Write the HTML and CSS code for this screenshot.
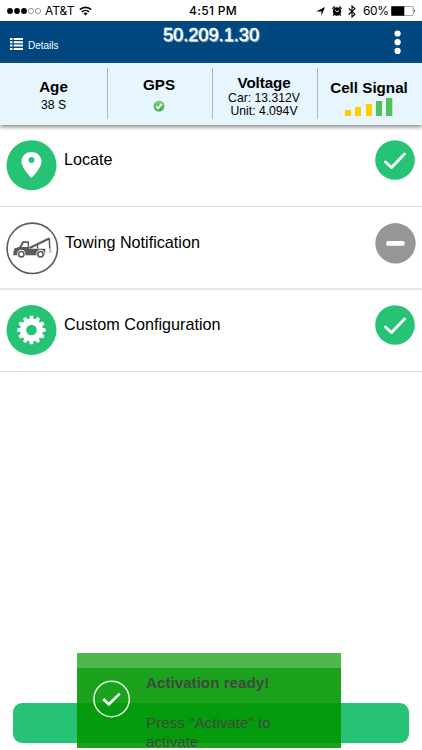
FILE: index.html
```html
<!DOCTYPE html>
<html lang="en">
<head>
<meta charset="utf-8">
<title>Details</title>
<link rel="stylesheet" href="styles.css">
</head>
<body>
<div class="screen">
  <div class="status">
    <div class="carrier">
      <svg class="dots" width="35" height="8" viewBox="0 0 35 8"><g><circle cx="3" cy="4" r="2.9"/><circle cx="10" cy="4" r="2.9"/><circle cx="17" cy="4" r="2.9"/></g><g fill="none" stroke="#555" stroke-width=".6"><circle cx="24" cy="4" r="2.6"/><circle cx="31" cy="4" r="2.6"/></g></svg>
      <span class="net">AT&amp;T</span>
      <svg class="wifi" width="13" height="10" viewBox="0 0 13 10"><path d="M.8 3.7a8.2 8.2 0 0 1 11.4 0M2.9 5.9a5.2 5.2 0 0 1 7.2 0" fill="none" stroke="#000" stroke-width="1.6"/><path d="M4.5 7.4a2.8 2.8 0 0 1 4 0L6.500 9.500z"/></svg>
    </div>
    <div class="clock">4:51 PM</div>
    <div class="indicators">
      <svg class="loc" width="9" height="9" viewBox="0 0 9 9"><path d="M9 0L5.400 9V4.600H0z"/></svg>
      <svg class="alarm" width="10" height="10" viewBox="0 0 10 10"><circle cx="5" cy="5.500" r="4.200"/><path d="M.4 2.700L2.700.6M9.600 2.700L7.300.6M2.200 8.400L1.200 9.600M7.800 8.400l1 1.200" stroke="#000" stroke-width="1.300"/><path d="M3 4l2 1.800L7 4.600" fill="none" stroke="#fff" stroke-width=".9"/></svg>
      <svg class="bt" width="8" height="13" viewBox="0 0 8 13"><path d="M.7 3.500L7 9.200 4 12V1l3 2.800L.7 9.500" fill="none" stroke="#000" stroke-width="1.100"/></svg>
      <span class="pct">60%</span>
      <svg class="battery" width="25" height="10" viewBox="0 0 25 10"><rect x=".4" y=".4" width="21.800" height="9.200" rx="1" fill="#fff" stroke="#777" stroke-width=".7"/><path d="M.3.3h13v9.400H.3z"/><path d="M23 3.200q1.800 1.800 0 3.600z"/></svg>
    </div>
  </div>

  <header class="bar">
    <div class="back">
      <svg width="13" height="12" viewBox="0 0 13 12" fill="#fff"><path d="M0 0h2.500v2H0zM3.700 0H13v2H3.700zM0 3.300h2.500v2H0zM3.700 3.300H13v2H3.700zM0 6.600h2.500v2H0zM3.700 6.600H13v2H3.700zM0 9.900h2.500v2H0zM3.700 9.900H13v2H3.700z"/></svg>
      <span>Details</span>
    </div>
    <h1>50.209.1.30</h1>
    <svg class="more" width="8" height="24" viewBox="0 0 8 24" fill="#fff"><circle cx="3.600" cy="3.500" r="3.100"/><circle cx="3.600" cy="12.200" r="3.100"/><circle cx="3.600" cy="20.900" r="3.100"/></svg>
  </header>

  <section class="stats">
    <div class="stat age"><b>Age</b><span>38 S</span></div>
    <div class="stat gps"><b>GPS</b>
      <svg width="12" height="12" viewBox="0 0 12 12"><defs><linearGradient id="g" x2="0" y2="1"><stop stop-color="#8bd18a"/><stop offset="1" stop-color="#3caa45"/></linearGradient></defs><circle cx="6" cy="6" r="5.500" fill="url(#g)"/><path d="M3.200 6.300l2 2L8.800 3.700" fill="none" stroke="#fff" stroke-width="1.800"/></svg>
    </div>
    <div class="stat volt"><b>Voltage</b><span>Car: 13.312V</span><span>Unit: 4.094V</span></div>
    <div class="stat cell"><b>Cell Signal</b>
      <svg width="48" height="19" viewBox="0 0 48 19"><path fill="#fc0" d="M0 13h6v6H0zM10 10h6v9h-6zM21 7h6v12h-6z"/><path fill="#52c05a" d="M31 4h6v15h-6zM41 1h6.300v18H41z"/></svg>
    </div>
  </section>

  <main class="list">
    <div class="row locate">
      <svg class="icon" width="51" height="51" viewBox="0 0 51 51"><circle cx="25.500" cy="25.200" r="25" fill="#25c373"/><path fill="#fff" fill-rule="evenodd" d="M25.500 12c-5.700 0-10 4.200-10 9.600C15.500 28.500 25.500 38 25.500 38s10-9.500 10-16.400c0-5.400-4.300-9.600-10-9.600zm0 5a3 3 0 1 1 0 6 3 3 0 0 1 0-6z"/></svg>
      <span class="label">Locate</span>
      <svg class="state" width="40" height="40" viewBox="0 0 40 40"><circle cx="20" cy="20" r="19.800" fill="#25c373"/><path d="M10.500 22l6 5.500L29.500 14" fill="none" stroke="#fff" stroke-width="2.900" stroke-linecap="round" stroke-linejoin="round"/></svg>
    </div>
    <div class="row towing">
      <svg class="icon" width="53" height="53" viewBox="0 0 53 53"><circle cx="26.300" cy="26.300" r="25.200" fill="#fff" stroke="#5b5b5b" stroke-width="1.600"/><path fill="#5b5b5b" fill-rule="evenodd" d="M7.300 33.300v-3.500l.8-.5v-2.800l5.400-1.700 2.300-4.600q.4-.9 1.500-.9H23v7.500h16.500l-.4 2.700v3.800zM15.600 25h6v-4.100h-3.800z"/><path d="M23.500 26l19.800-9.500" fill="none" stroke="#5b5b5b" stroke-width="2"/><path d="M31.500 22.500v4M43.200 16l.6 10.500" fill="none" stroke="#5b5b5b" stroke-width="1.500"/><path d="M43.800 26.500v1.200c2 .7 1.200 3.300-.9 2.200" fill="none" stroke="#777" stroke-width=".9"/><g fill="#fff"><circle cx="15.300" cy="32" r="4.200"/><circle cx="34.500" cy="32" r="4.200"/></g><g fill="#fff" stroke="#5b5b5b" stroke-width="1.600"><circle cx="15.300" cy="32.200" r="2.700"/><circle cx="34.500" cy="32.200" r="2.700"/></g></svg>
      <span class="label">Towing Notification</span>
      <svg class="state" width="41" height="41" viewBox="0 0 41 41"><circle cx="20.500" cy="20.300" r="20.200" fill="#969696"/><rect x="11.300" y="18" width="18.200" height="4.700" rx="1.500" fill="#fff"/></svg>
    </div>
    <div class="row custom">
      <svg class="icon" width="51" height="51" viewBox="0 0 51 51"><circle cx="25.500" cy="25" r="25" fill="#25c373"/><g transform="translate(25.500 25)" fill="#fff"><circle r="11.300"/><path id="t" d="M-2.300-10.500L-1.600-14.200H1.600L2.300-10.500V10.500L1.600 14.200H-1.600L-2.300 10.500z"/><use href="#t" transform="rotate(30)"/><use href="#t" transform="rotate(60)"/><use href="#t" transform="rotate(90)"/><use href="#t" transform="rotate(120)"/><use href="#t" transform="rotate(150)"/><circle r="5.300" fill="#25c373"/></g></svg>
      <span class="label">Custom Configuration</span>
      <svg class="state" width="40" height="40" viewBox="0 0 40 40"><circle cx="20" cy="20" r="19.800" fill="#25c373"/><path d="M10.500 22l6 5.500L29.500 14" fill="none" stroke="#fff" stroke-width="2.900" stroke-linecap="round" stroke-linejoin="round"/></svg>
    </div>
  </main>

  <footer class="foot"><div class="activate"></div></footer>

  <div class="toast">
    <svg width="38" height="38" viewBox="0 0 38 38" fill="none" stroke="#e5f6e5"><circle cx="18.600" cy="19" r="17.700" stroke-width="1.500"/><path d="M10.300 19l5.500 5.300L26.800 13.600" stroke="#fff" stroke-width="2.700"/></svg>
    <div class="message"><b>Activation ready!</b><p>Press "Activate" to<br>activate</p></div>
  </div>
</div>
</body>
</html>
```

FILE: styles.css
```css
* { box-sizing: border-box; }
body { margin: 0; background: #fff; color: #000; font-family: "Liberation Sans", sans-serif; }
svg { display: block; flex: none; }
.screen { position: relative; width: 422px; height: 750px; overflow: hidden; display: flex; flex-direction: column; }

.status { height: 21px; flex: none; display: grid; grid-template-columns: 150px 1fr 150px; font-family: Inter, sans-serif; font-size: 12px; line-height: 22px; }
.carrier, .indicators { display: flex; align-items: center; }
.carrier { padding-left: 7px; }
.net { margin-left: 3px; width: 30px; white-space: nowrap; }
.wifi { margin-left: 4px; }
.clock { text-align: center; font-weight: 500; padding-left: 4px; letter-spacing: .3px; }
.indicators { justify-content: flex-end; padding-right: 6px; }
.alarm { margin-left: 7px; }
.bt { margin-left: 6px; }
.pct { margin-left: 7px; width: 25px; letter-spacing: -.4px; }
.battery { margin-left: 3px; }

.bar { height: 42px; flex: none; background: #00467f; color: #fff; display: grid; grid-template-columns: 110px 1fr 110px; }
.back { display: flex; align-items: flex-start; padding: 16px 0 0 10px; gap: 5px; font-size: 10px; line-height: 12px; }
.back svg { margin-top: 1px; }
.back span { margin-top: 3px; }
h1 { margin: 4px 0 0; text-align: center; font-size: 18.200px; line-height: 21px; font-weight: 400; text-shadow: 1px 1px 1px #b9c8d8; -webkit-text-stroke: .4px #fff; }
.more { justify-self: end; margin: 9px 20px 0 0; }

.stats { height: 62px; flex: none; background: #e7f5fe; display: grid; grid-template-columns: 108px 105px 105px 104px; padding: 5px 0 6px; box-shadow: 0 2px 4px #888; }
.stat { display: flex; flex-direction: column; align-items: center; border-right: 1px solid #adb8c0; font-size: 12px; line-height: 12.500px; white-space: nowrap; padding-right: 2px; }
.stat:last-child { border-right: 0; }
.stat b { font-size: 15.200px; line-height: 17px; }
.age { padding-top: 10px; padding-right: 0; }
.age span { margin-top: 4px; font-size: 12.200px; }
.gps { padding-top: 8px; }
.gps svg { margin-top: 7px; }
.volt { padding-top: 6px; }
.volt b { margin-bottom: 1px; letter-spacing: -.1px; }
.volt span { font-size: 12.200px; }
.cell { padding-top: 11px; }
.cell svg { margin-top: 1px; }

.row { display: flex; align-items: flex-start; border-bottom: 1px solid #ddd; padding-left: 6px; }
.locate { height: 82px; padding-top: 15px; }
.towing { height: 83px; padding-top: 15px; border-bottom-width: 2px; border-color: #e6e6e6; }
.custom { height: 82px; padding-top: 15px; }
.label { margin: 10px 0 0 7px; font-size: 16.200px; line-height: 18px; }
.towing .label { margin-left: 6px; margin-top: 11px; }
.state { margin: 0 7px 0 auto; }
.towing .state { margin-right: 6px; margin-top: 1px; }

.foot { margin-top: auto; padding: 0 13px 7px; }
.activate { height: 40px; border-radius: 9px; background: #25c373; }
.toast { position: absolute; left: 77px; top: 653px; width: 264px; height: 95px; padding: 20px 0 0 16px; display: flex; color: #3e493e; background: linear-gradient(#4eb74e 0 15px, rgba(0,150,0,.89) 15px); }
.toast svg { margin-top: 7px; }
.message { margin-left: 15px; font-size: 15.200px; line-height: 19px; white-space: nowrap; }
.message b { display: block; }
.message p { margin: 21px 0 0; }
```
